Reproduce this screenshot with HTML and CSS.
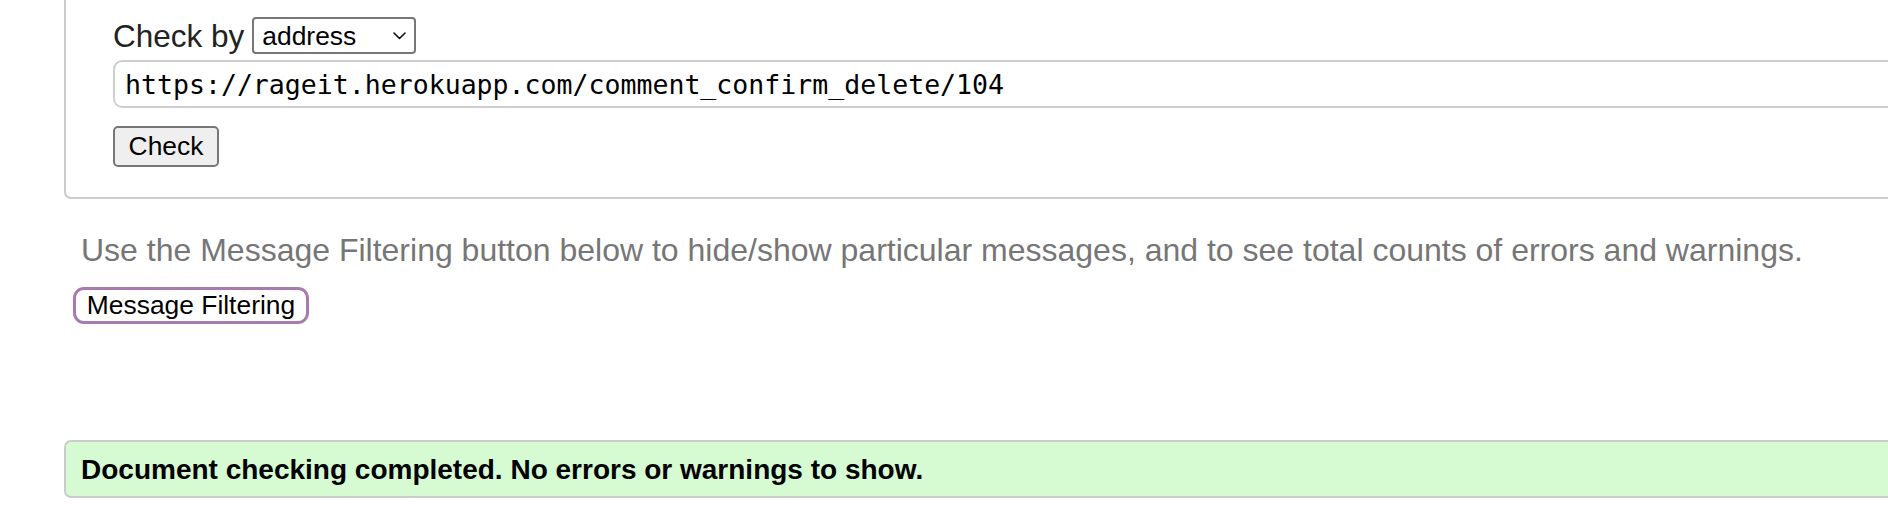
FILE: index.html
```html
<!DOCTYPE html>
<html lang="en">
<head>
<meta charset="utf-8">
<title>Nu Html Checker</title>
<link rel="stylesheet" href="styles.css">
</head>
<body>
<div class="page">
  <div class="checker">
    <div class="checkby">
      <label class="checkby-label" for="docselect">Check by</label>
      <span class="select-wrap">
        <select id="docselect" class="select">
          <option>address</option>
          <option>file upload</option>
          <option>text input</option>
        </select>
        <svg class="chev" width="13" height="8" viewBox="0 0 13 8"><path d="M1 1 L6.5 6.5 L12 1" fill="none" stroke="#111" stroke-width="1.6" stroke-linecap="round" stroke-linejoin="round"/></svg>
      </span>
    </div>
    <input class="url" type="url" value="https://rageit.herokuapp.com/comment_confirm_delete/104">
    <button class="check" type="button">Check</button>
  </div>
  <p class="hint">Use the Message Filtering button below to hide/show particular messages, and to see total counts of errors and warnings.</p>
  <button class="filter" type="button">Message Filtering</button>
  <div class="success">Document checking completed. No errors or warnings to show.</div>
</div>
</body>
</html>
```

FILE: styles.css
```css
* { box-sizing: border-box; }
html, body { margin: 0; padding: 0; overflow: hidden; background: #fff; }
body { font-family: "Liberation Sans", Arial, Helvetica, sans-serif; color: #000; }

.page { padding-left: 64px; width: 2200px; }

.checker {
  border: 2px solid #cbcbcb;
  border-top: 0;
  border-radius: 0 0 7px 7px;
  padding: 17px 0 30px 47px;
}

.checkby { display: flex; align-items: center; height: 37px; }
.checkby-label { font-size: 31.5px; color: #222; margin-right: 8px; line-height: 36px; }

.select-wrap { position: relative; display: inline-block; height: 37px; }
.select {
  -webkit-appearance: none;
  appearance: none;
  width: 164px;
  height: 37px;
  margin: 0;
  padding: 0 0 0 8px;
  font: 26.4px "Liberation Sans", Arial, sans-serif;
  color: #000;
  background: #fff;
  border: 2px solid #777;
  border-radius: 4px;
}
.chev { position: absolute; left: 141px; top: 15px; pointer-events: none; }

.url {
  display: block;
  margin: 6px 0 0 0;
  width: 1900px;
  height: 48px;
  padding: 0 10px;
  border: 2px solid #cfcfcf;
  border-radius: 9px;
  font: 26.55px "DejaVu Sans Mono", "Liberation Mono", monospace;
  color: #000;
  background: #fff;
}

.check {
  display: block;
  margin: 18px 0 0 0;
  width: 106px;
  height: 41px;
  padding: 0;
  font: 26.4px "Liberation Sans", Arial, sans-serif;
  color: #000;
  background: #efefef;
  border: 2px solid #777;
  border-radius: 5px;
}

.hint {
  margin: 34.5px 0 0 17px;
  font-size: 32px;
  line-height: 33px;
  color: #767676;
}

.filter {
  display: block;
  margin: 20px 0 0 9px;
  width: 236px;
  height: 37px;
  padding: 0;
  font: 26.4px "Liberation Sans", Arial, sans-serif;
  color: #000;
  background: #fff;
  border: 3px solid #a87bb0;
  border-radius: 11px;
}

.success {
  display: flex;
  align-items: center;
  margin-top: 116.5px;
  height: 58px;
  padding-left: 15px;
  border: 2px solid #cbcbcb;
  border-radius: 7px;
  background: #d6fbd3;
  font-weight: bold;
  font-size: 28px;
  line-height: 33px;
  color: #000;
}
```
